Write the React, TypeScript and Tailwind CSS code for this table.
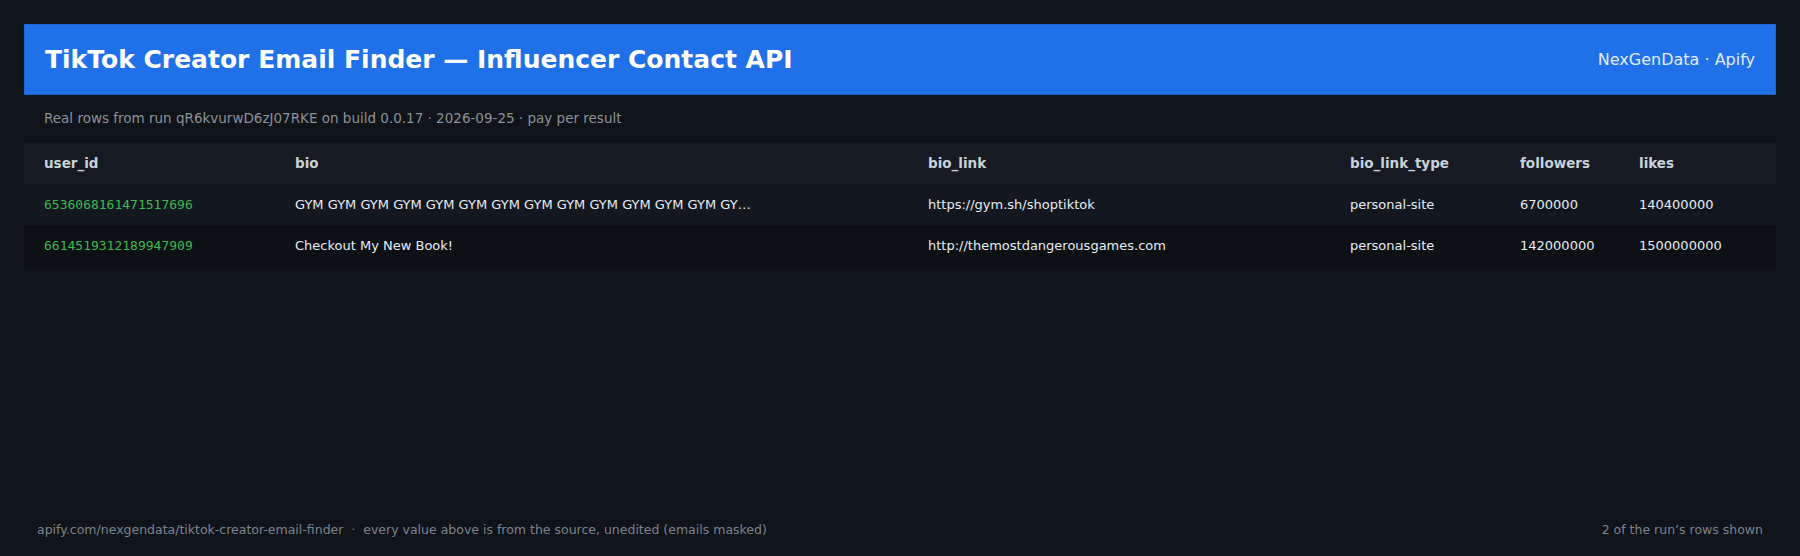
import React from 'react';

const rows = [
  {
    user_id: '6536068161471517696',
    bio: 'GYM GYM GYM GYM GYM GYM GYM GYM GYM GYM GYM GYM GYM GY…',
    bio_link: 'https://gym.sh/shoptiktok',
    bio_link_type: 'personal-site',
    followers: '6700000',
    likes: '140400000',
  },
  {
    user_id: '6614519312189947909',
    bio: 'Checkout My New Book!',
    bio_link: 'http://themostdangerousgames.com',
    bio_link_type: 'personal-site',
    followers: '142000000',
    likes: '1500000000',
  },
];

const cols = [
  { key: 'user_id', w: 'w-[251px]' },
  { key: 'bio', w: 'w-[633px]' },
  { key: 'bio_link', w: 'w-[422px]' },
  { key: 'bio_link_type', w: 'w-[170px]' },
  { key: 'followers', w: 'w-[119px]' },
  { key: 'likes', w: '' },
] as const;

const App = () => {
  return (
    <div className="min-h-[556px] bg-[#0f131a] flex flex-col font-['DejaVu_Sans',sans-serif]">
      <div className="px-6 pt-6">
        {/* Header bar */}
        <div className="h-[71px] bg-[#1f70e9] border border-[#1c63cf] flex items-center justify-between px-5">
          <h1 className="text-[25px] font-bold text-white leading-none">
            TikTok Creator Email Finder — Influencer Contact API
          </h1>
          <span className="text-[16px] text-[#e3ecfb]">NexGenData · Apify</span>
        </div>

        <p className="mt-[13px] px-5 text-[13.5px] leading-5 text-[#8b929b]">
          Real rows from run qR6kvurwD6zJ07RKE on build 0.0.17 · 2026-09-25 · pay per result
        </p>

        {/* Table */}
        <table className="mt-[15px] w-full table-fixed border-collapse">
          <thead>
            <tr className="bg-[#161b23] h-[41px]">
              {cols.map((c) => (
                <th
                  key={c.key}
                  className={`${c.w} text-left pl-5 text-[13.5px] font-bold text-[#c9d1d9]`}
                >
                  {c.key}
                </th>
              ))}
            </tr>
          </thead>
          <tbody>
            {rows.map((r, i) => (
              <tr key={r.user_id} className={`h-[41px] ${i === 0 ? 'bg-[#131820]' : 'bg-[#0d1015]'}`}>
                <td className="pl-5 font-['DejaVu_Sans_Mono',monospace] text-[13px] text-[#3fb950]">
                  {r.user_id}
                </td>
                <td className="pl-5 text-[13px] text-[#e6edf3] whitespace-nowrap">{r.bio}</td>
                <td className="pl-5 text-[13px] text-[#e6edf3]">{r.bio_link}</td>
                <td className="pl-5 text-[13px] text-[#e6edf3]">{r.bio_link_type}</td>
                <td className="pl-5 text-[13px] text-[#e6edf3]">{r.followers}</td>
                <td className="pl-5 text-[13px] text-[#e6edf3]">{r.likes}</td>
              </tr>
            ))}
          </tbody>
        </table>
      </div>

      {/* Footer */}
      <div className="mt-auto flex items-center justify-between px-[37px] pb-[17px] text-[12.5px] leading-[18px] text-[#7d848d]">
        <span className="whitespace-pre">
          apify.com/nexgendata/tiktok-creator-email-finder  ·  every value above is from the source, unedited (emails masked)
        </span>
        <span>2 of the run’s rows shown</span>
      </div>
    </div>
  );
};

export default App;
